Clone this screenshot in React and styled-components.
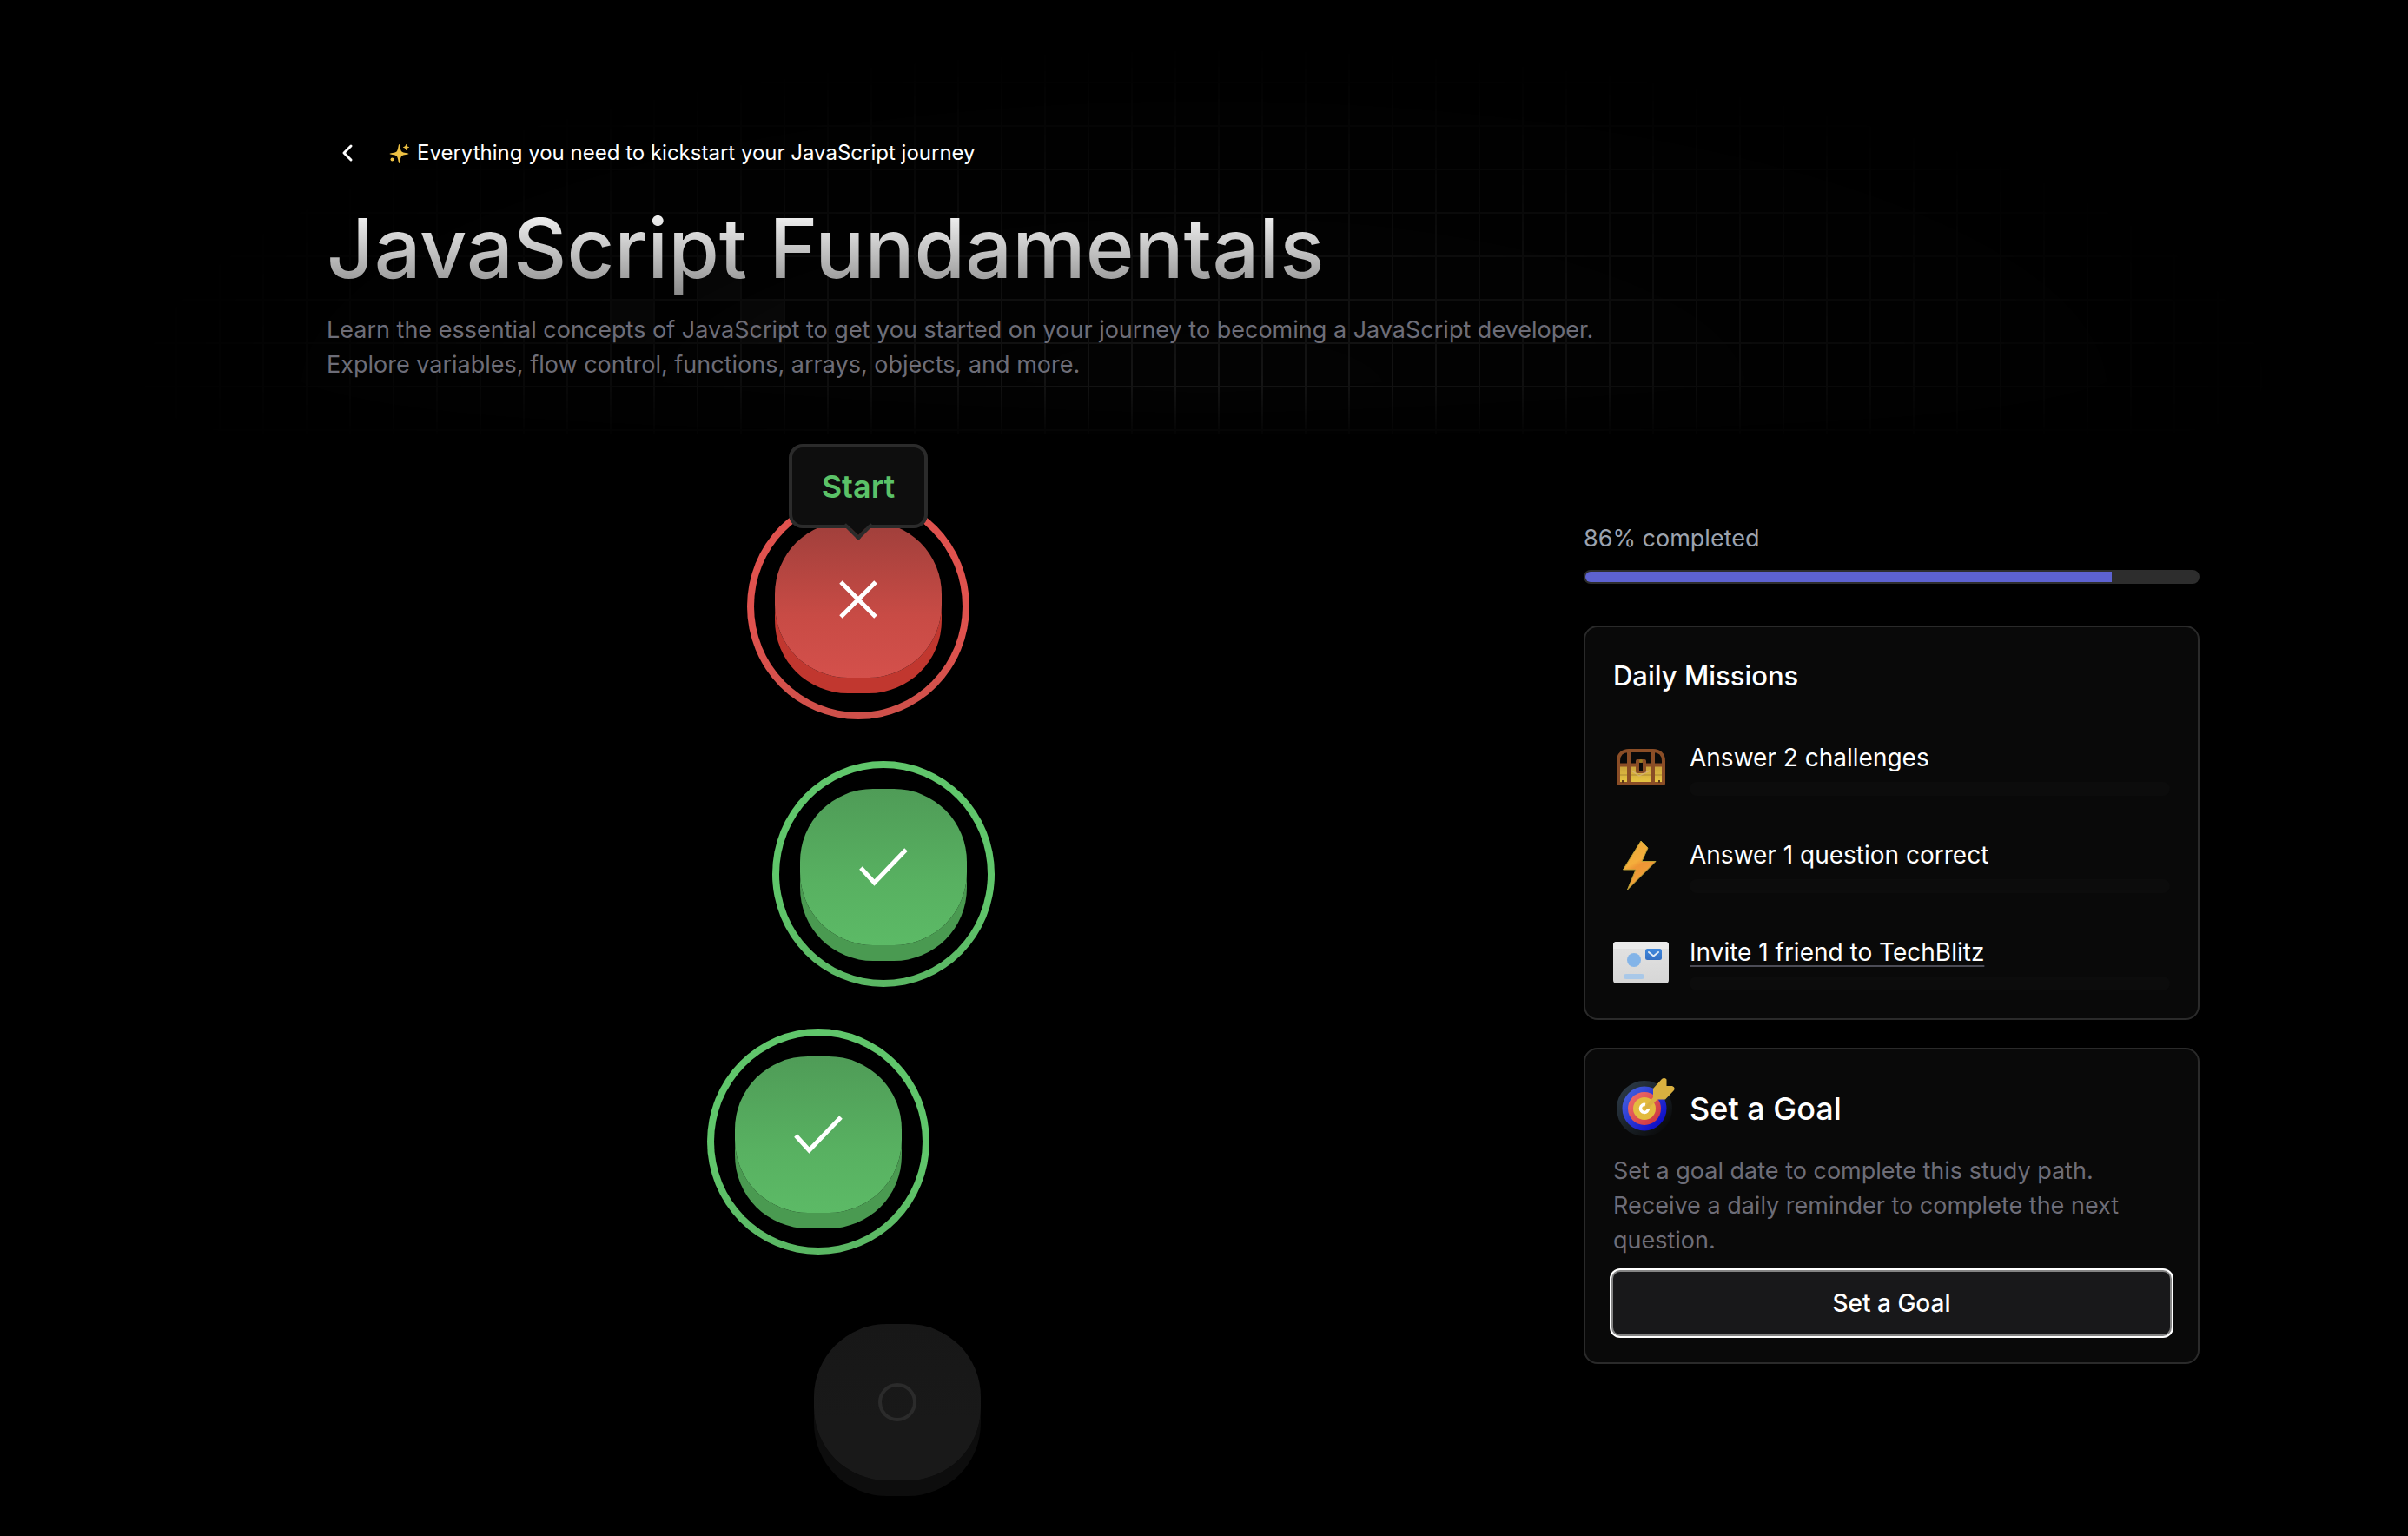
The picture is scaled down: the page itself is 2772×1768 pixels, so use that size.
import React from "react";
import styled, { createGlobalStyle, css } from "styled-components";

const heading = '"Inter", "Liberation Sans", sans-serif';

const GlobalStyle = createGlobalStyle`
  *, *::before, *::after { box-sizing: border-box; }
  body {
    margin: 0;
    background: #000;
    color: #fff;
    font-family: "Inter", "Liberation Sans", sans-serif;
    font-size: 27px;
    line-height: 40px;
    overflow-x: hidden;
  }
  h1, h2, p, ol, ul { margin: 0; padding: 0; font-weight: inherit; }
`;

const Page = styled.div`
  position: relative;
  min-height: 100vh;
  overflow: hidden;
`;

const GridBackdrop = styled.svg`
  position: absolute;
  top: 0;
  left: 0;
  width: 100%;
  height: 500px;
  mask-image: radial-gradient(ellipse 45% 400px at 50% 450px, #000, transparent),
    linear-gradient(#000 88%, rgba(0, 0, 0, 0.2));
  mask-composite: intersect;
`;

const Shell = styled.div`
  position: relative;
  padding: 152px 240px 0 376px;
  height: 100vh;
  overflow: hidden;
`;

const Header = styled.header`
  display: flex;
  flex-direction: column;
`;

const Eyebrow = styled.div`
  display: flex;
  align-items: center;
  gap: 24px;
  height: 48px;
`;

const BackLink = styled.a`
  display: grid;
  place-items: center;
  width: 48px;
  height: 48px;
  color: #fff;
`;

const Tagline = styled.p`
  display: flex;
  align-items: center;
  gap: 8px;
  font-size: 24px;
  line-height: 32px;
`;

const Title = styled.h1`
  align-self: flex-start;
  margin-top: 40px;
  font-family: ${heading};
  font-size: 95px;
  font-weight: 500;
  line-height: 92px;
  padding-bottom: 12px;
  color: transparent;
  background: linear-gradient(to bottom, #f8f8f8, #868686);
  background-clip: text;
`;

const Lead = styled.p`
  max-width: 1500px;
  margin-top: 16px;
  color: #6d6d78;
`;

const Columns = styled.main`
  display: grid;
  grid-template-columns: minmax(0, 1fr) 709px;
  gap: 223px;
  margin-top: 128px;
`;

const Path = styled.ol`
  display: flex;
  flex-direction: column;
  align-items: center;
  gap: 48px;
  list-style: none;
`;

const palette = {
  wrong: { ring: "linear-gradient(#e0524e 60%, #cd504a)", top: "#9f3f3b", mid: "#c84b45", end: "#d4504b", side: "#c1372f", icon: "#fff" },
  right: { ring: "linear-gradient(#60c66b 60%, #5ab663)", top: "#4f9c57", mid: "#58b161", end: "#5cba66", side: "#4a9a51", icon: "#fff" },
  locked: { ring: "none", top: "#171717", mid: "#191919", end: "#191919", side: "#0d0d0d", icon: "#2b2b2b" },
};

const Step = styled.li`
  position: relative;
  width: 256px;
  height: 260px;
  padding: 32px;
  transform: translateX(${(p) => p.$shift}px);

  &::before {
    content: "";
    position: absolute;
    inset: 0;
    border-radius: 50%;
    background: ${(p) => palette[p.$state].ring};
  }
  &::after {
    content: "";
    position: absolute;
    inset: 8px;
    border-radius: 50%;
    background: #000;
  }
`;

const StepButton = styled.button`
  position: relative;
  z-index: 1;
  display: grid;
  place-items: center;
  width: 192px;
  height: 180px;
  padding: 0;
  border: 0;
  border-radius: 84px;
  color: ${(p) => palette[p.$state].icon};
  background: linear-gradient(
    ${(p) => palette[p.$state].top},
    ${(p) => palette[p.$state].mid} 60%,
    ${(p) => palette[p.$state].end}
  );
  box-shadow: 0 18px 0 ${(p) => palette[p.$state].side};
`;

const Tooltip = styled.div`
  position: absolute;
  z-index: 2;
  top: -57px;
  left: 48px;
  width: 160px;
  height: 97px;
  display: grid;
  place-items: center;
  border: 4px solid #2b2b2b;
  border-radius: 16px;
  background: #0e0e0e;
  color: #5bc268;
  font-family: ${heading};
  font-size: 36px;
  font-weight: 600;

  &::after {
    content: "";
    position: absolute;
    bottom: -13px;
    left: 64px;
    width: 24px;
    height: 24px;
    border: solid #2b2b2b;
    border-width: 0 4px 4px 0;
    background: linear-gradient(135deg, transparent 30%, #0e0e0e 30%);
    transform: rotate(45deg);
  }
`;

const Sidebar = styled.aside`
  display: flex;
  flex-direction: column;
  gap: 32px;
  padding-top: 32px;
`;

const Completion = styled.div`
  display: flex;
  flex-direction: column;
  gap: 16px;
  margin-bottom: 16px;
`;

const CompletionLabel = styled.p`
  color: #9ca3af;
  font-family: ${heading};
`;

const Track = styled.div`
  height: 16px;
  overflow: hidden;
  border-radius: 8px;
  ${(p) =>
    p.$muted
      ? css`
          background: #0c0c0c;
        `
      : css`
          border: 2px solid #2d2d2d;
          background: #2d2d2d;
        `}
`;

const Fill = styled.div`
  height: 100%;
  background: #5d62d0;
`;

const Card = styled.section`
  border: 2px solid #2a2a2a;
  border-radius: 16px;
  background: #090909;
  padding: 32px;
`;

const MissionTitle = styled.h2`
  font-family: ${heading};
  font-size: 31px;
  font-weight: 500;
  line-height: 48px;
`;

const Missions = styled.ul`
  display: flex;
  flex-direction: column;
  gap: 48px;
  margin-top: 50px;
  list-style: none;
`;

const Mission = styled.li`
  display: grid;
  grid-template-columns: 64px minmax(0, 1fr);
  gap: 24px;
  height: 64px;
`;

const MissionBody = styled.div`
  display: flex;
  flex-direction: column;
  justify-content: space-between;
  font-family: ${heading};
  font-size: 28px;
`;

const MissionLink = styled.a`
  align-self: flex-start;
  height: 40px;
  color: #fff;
  text-decoration: underline;
  text-decoration-color: #4b4b55;
  text-decoration-thickness: 2px;
  text-underline-offset: 5px;
`;

const GoalHead = styled.div`
  display: flex;
  align-items: center;
  gap: 24px;
  height: 72px;
`;

const GoalTitle = styled.h2`
  font-family: ${heading};
  font-size: 36px;
  font-weight: 500;
`;

const GoalText = styled.p`
  margin-top: 16px;
  color: #6d6d78;
`;

const GoalButton = styled.button`
  display: block;
  width: 100%;
  height: 72px;
  margin-top: 16px;
  border: 0;
  border-radius: 8px;
  background: #18181a;
  color: #fff;
  font-family: ${heading};
  font-size: 28px;
  font-weight: 500;
  box-shadow: 0 0 0 2px #848484, 0 0 0 4px #fff;
`;

function Backdrop() {
  return (
    <GridBackdrop aria-hidden="true">
      <defs>
        <pattern id="cells" width="50" height="50" x="2" y="44" patternUnits="userSpaceOnUse">
          <path d="M0 1H50M1 0V50" stroke="#161616" strokeWidth="2" fill="none" />
        </pattern>
      </defs>
      <rect width="100%" height="100%" fill="#030303" />
      <rect width="100%" height="100%" fill="url(#cells)" />
      <g fill="#0e0e0e">
        <rect x="804" y="296" width="48" height="48" />
        <rect x="704" y="346" width="48" height="48" />
        <rect x="854" y="346" width="48" height="48" />
      </g>
    </GridBackdrop>
  );
}

const Chevron = () => (
  <svg width="32" height="32" viewBox="0 0 32 32" fill="none" stroke="currentColor" strokeWidth="3" strokeLinecap="round" strokeLinejoin="round">
    <path d="M20 8l-8 8 8 8" />
  </svg>
);

const Sparkles = () => (
  <svg width="24" height="24" viewBox="0 0 24 24" fill="#ecc043">
    <path d="M11.500 2C12.500 2 12.600 9 14.500 10.500C16 12 22.500 12 22.500 13C22.500 14 16 14 14.500 15.500C12.600 17 12.500 24 11.500 24C10.500 24 10.400 17 8.500 15.500C7 14 0.500 14 0.500 13C0.500 12 7 12 8.500 10.500C10.400 9 10.500 2 11.500 2Z" />
    <path d="M19.500 2.500C20 4.500 20.500 5 22.500 5.500C20.500 6 20 6.500 19.500 8.500C19 6.500 18.500 6 16.500 5.500C18.500 5 19 4.500 19.500 2.500Z" stroke="#ecc043" />
    <circle cx="3.500" cy="19.500" r="2" />
  </svg>
);

const stateIcon = {
  wrong: (
    <svg width="64" height="64" viewBox="0 0 64 64" fill="none" stroke="currentColor" strokeWidth="5">
      <path d="M12 12L52 52M52 12L12 52" />
    </svg>
  ),
  right: (
    <svg width="64" height="64" viewBox="0 0 64 64" fill="none" stroke="currentColor" strokeWidth="5">
      <path d="M6 33L21.500 50L58 12" />
    </svg>
  ),
  locked: (
    <svg width="64" height="64" viewBox="0 0 64 64" fill="none" stroke="currentColor" strokeWidth="4">
      <circle cx="32" cy="32" r="20" />
    </svg>
  ),
};

const ChestIcon = () => (
  <svg width="64" height="64" viewBox="0 0 64 64">
    <defs>
      <linearGradient id="gold" x1="0" y1="0" x2="0" y2="1">
        <stop offset="0" stopColor="#c9a23a" />
        <stop offset="1" stopColor="#e9c743" />
      </linearGradient>
    </defs>
    <path d="M6 29H58V50H6Z" fill="url(#gold)" />
    <path d="M6 40H58" stroke="#a98532" strokeWidth="1" />
    <path d="M6 50V24C6 16 11 12 18 12H46C53 12 58 16 58 24V50Z" fill="none" stroke="#8a4d26" strokeWidth="4" strokeLinejoin="round" />
    <path d="M6 28.500H58M18 12V50M46 12V50" stroke="#8a4d26" strokeWidth="4" fill="none" />
    <rect x="26" y="22" width="12" height="16" rx="2" fill="#8a4d26" />
    <path d="M21 35L30 41L42 35" stroke="#d9b590" strokeWidth="1.500" fill="none" opacity="0.6" />
    <rect x="30" y="26" width="4" height="9" fill="#090909" />
    <circle cx="32" cy="24" r="2" fill="#9a7a22" />
    <path d="M10 46h2v3h-2zM52 46h2v3h-2z" fill="#5d3a1a" />
  </svg>
);

const BoltIcon = () => (
  <svg width="64" height="64" viewBox="0 0 64 64">
    <defs>
      <linearGradient id="bolt" x1="0" y1="0" x2="0.400" y2="1">
        <stop offset="0" stopColor="#e8a838" />
        <stop offset="0.500" stopColor="#f5ae3c" />
        <stop offset="0.600" stopColor="#ee9535" />
        <stop offset="1" stopColor="#efa83a" />
      </linearGradient>
    </defs>
    <path d="M32 4L40 12L33 27.500H49L16.500 60L26 37H11.500Z" fill="url(#bolt)" stroke="#b9a035" strokeWidth="1" />
  </svg>
);

const InviteIcon = () => (
  <svg width="64" height="64" viewBox="0 0 64 64">
    <defs>
      <linearGradient id="paper" x1="0" y1="0" x2="0" y2="1">
        <stop offset="0" stopColor="#e3e3e3" />
        <stop offset="1" stopColor="#d6d6d6" />
      </linearGradient>
      <linearGradient id="stamp" x1="0" y1="0" x2="0" y2="1">
        <stop offset="0" stopColor="#4189dd" />
        <stop offset="1" stopColor="#3470c4" />
      </linearGradient>
    </defs>
    <rect y="8" width="64" height="48" rx="4" fill="url(#paper)" />
    <path d="M4 8H60Q64 8 64 12V16H0V12Q0 8 4 8Z" fill="#ebebeb" />
    <circle cx="24" cy="29" r="8" fill="#83b4e8" />
    <rect x="12" y="45" width="24" height="6" rx="3" fill="#a9c8e8" />
    <rect x="37" y="16" width="19" height="13" rx="2.500" fill="url(#stamp)" />
    <path d="M41 20L46.500 24.500L52 20" stroke="#dfe9f5" strokeWidth="2" fill="none" strokeLinecap="round" />
  </svg>
);

const TargetIcon = () => (
  <svg width="64" height="72" viewBox="0 0 64 72" overflow="visible">
    <defs>
      <linearGradient id="t1" x1="0" y1="0" x2="1" y2="1">
        <stop offset="0.100" stopColor="#2c3a47" />
        <stop offset="0.900" stopColor="#090909" />
      </linearGradient>
      <linearGradient id="t2" x1="0" y1="0" x2="1" y2="1">
        <stop offset="0.100" stopColor="#4560dc" />
        <stop offset="0.900" stopColor="#0a08c8" />
      </linearGradient>
      <linearGradient id="t3" x1="0" y1="0" x2="1" y2="1">
        <stop offset="0" stopColor="#f2706c" />
        <stop offset="1" stopColor="#c9303c" />
      </linearGradient>
    </defs>
    <circle cx="36" cy="36" r="32" fill="url(#t1)" />
    <circle cx="36" cy="36" r="25.500" fill="url(#t2)" />
    <circle cx="36" cy="36" r="19" fill="url(#t3)" />
    <circle cx="36" cy="36" r="13" fill="#e3bb3f" />
    <path d="M37 31.500A4.500 4.500 0 1 0 40.500 36" stroke="#fff" strokeWidth="3.500" fill="none" />
    <path d="M46 13L56 2Q59 0 61.500 2.500V10H68Q72 11.500 70 15L60 25.500H51L39 37L36 35L46 23Z" fill="#d9b040" />
  </svg>
);

const steps = [
  { state: "wrong", label: "Answered incorrectly", shift: 0, tip: "Start" },
  { state: "right", label: "Answered correctly", shift: 29 },
  { state: "right", label: "Answered correctly", shift: -46 },
  { state: "locked", label: "Not answered", shift: 45 },
];

const missions = [
  { icon: <ChestIcon />, text: "Answer 2 challenges" },
  { icon: <BoltIcon />, text: "Answer 1 question correct" },
  { icon: <InviteIcon />, text: "Invite 1 friend to TechBlitz", href: "#invite" },
];

export default function App() {
  const completed = 86;
  return (
    <Page>
      <GlobalStyle />
      <Backdrop />
      <Shell>
        <Header>
          <Eyebrow>
            <BackLink href="#back" aria-label="Back">
              <Chevron />
            </BackLink>
            <Tagline>
              <Sparkles />
              Everything you need to kickstart your JavaScript journey
            </Tagline>
          </Eyebrow>
          <Title>JavaScript Fundamentals</Title>
          <Lead>
            Learn the essential concepts of JavaScript to get you started on your journey to becoming a JavaScript
            developer. Explore variables, flow control, functions, arrays, objects, and more.
          </Lead>
        </Header>
        <Columns>
          <Path>
            {steps.map((s, i) => (
              <Step key={i} $state={s.state} $shift={s.shift}>
                <StepButton $state={s.state} aria-label={s.label}>
                  {stateIcon[s.state]}
                </StepButton>
                {s.tip && <Tooltip>{s.tip}</Tooltip>}
              </Step>
            ))}
          </Path>
          <Sidebar>
            <Completion>
              <CompletionLabel>{completed}% completed</CompletionLabel>
              <Track>
                <Fill style={{ width: `${completed}%` }} />
              </Track>
            </Completion>
            <Card>
              <MissionTitle>Daily Missions</MissionTitle>
              <Missions>
                {missions.map((m) => (
                  <Mission key={m.text}>
                    {m.icon}
                    <MissionBody>
                      {m.href ? <MissionLink href={m.href}>{m.text}</MissionLink> : <span>{m.text}</span>}
                      <Track $muted />
                    </MissionBody>
                  </Mission>
                ))}
              </Missions>
            </Card>
            <Card>
              <GoalHead>
                <TargetIcon />
                <GoalTitle>Set a Goal</GoalTitle>
              </GoalHead>
              <GoalText>
                Set a goal date to complete this study path. Receive a daily reminder to complete the next question.
              </GoalText>
              <GoalButton>Set a Goal</GoalButton>
            </Card>
          </Sidebar>
        </Columns>
      </Shell>
    </Page>
  );
}
